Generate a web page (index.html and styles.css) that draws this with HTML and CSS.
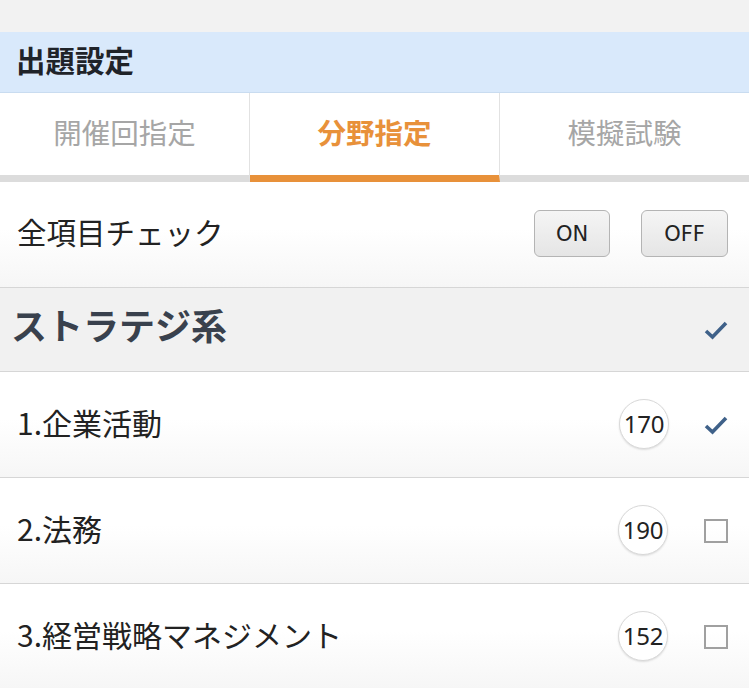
FILE: index.html
```html
<!DOCTYPE html>
<html lang="ja">
<head>
<meta charset="utf-8">
<link rel="stylesheet" href="styles.css">
</head>
<body>
<div class="topbar"></div>
<div class="header"><span class="header-title">出題設定</span></div>
<div class="tabs">
  <div class="tab"><span class="tab-text">開催回指定</span></div>
  <div class="tab active"><span class="tab-text">分野指定</span></div>
  <div class="tab last"><span class="tab-text">模擬試験</span></div>
</div>
<div class="row allcheck">
  <span class="label">全項目チェック</span>
  <div class="buttons">
    <button class="btn on">ON</button>
    <button class="btn off">OFF</button>
  </div>
</div>
<div class="category">
  <span class="cat-label">ストラテジ系</span>
  <svg class="check" viewBox="0 0 24 20" width="24" height="20"><path d="M2 11 L8.5 17 L22 3" fill="none" stroke="#3f6189" stroke-width="3.6"/></svg>
</div>
<div class="row item">
  <span class="label">1.企業活動</span>
  <span class="badge">170</span>
  <svg class="check" viewBox="0 0 24 20" width="24" height="20"><path d="M2 11 L8.5 17 L22 3" fill="none" stroke="#3f6189" stroke-width="3.6"/></svg>
</div>
<div class="row item">
  <span class="label">2.法務</span>
  <span class="badge">190</span>
  <span class="box"></span>
</div>
<div class="row item">
  <span class="label">3.経営戦略マネジメント</span>
  <span class="badge">152</span>
  <span class="box"></span>
</div>
</body>
</html>
```
FILE: styles.css
```css
html, body {
  margin: 0;
  padding: 0;
  background: #ffffff;
  font-family: "Noto Sans CJK JP", "Noto Sans", sans-serif;
  color: #222;
}
.topbar {
  height: 32px;
  background: #f2f2f2;
}
.header {
  height: 60px;
  background: #d9e9fb;
  border-bottom: 1px solid #c9dcf0;
  display: flex;
  align-items: center;
  padding-left: 16px;
  font-size: 29.5px;
  font-weight: 700;
  color: #1f2329;
  line-height: 1;
}
.header-title {
  margin-bottom: 4px;
}
.tabs {
  display: flex;
  height: 89px;
}
.tab {
  flex: 1;
  display: flex;
  align-items: center;
  justify-content: center;
  border-right: 1px solid #e2e2e2;
  border-bottom: 7px solid #dcdcdc;
  font-size: 28.5px;
  color: #a6a6a6;
  background: #fff;
  line-height: 1;
}
.tab-text {
  margin-bottom: 4px;
}
.tab.last { border-right: none; }
.tab.active {
  color: #e8913a;
  font-weight: 700;
  border-bottom-color: #e8913a;
}
.row {
  display: flex;
  align-items: center;
  height: 105px;
  padding: 0 21px 0 17px;
  border-bottom: 1px solid #d6d6d6;
  background: linear-gradient(#ffffff 0%, #ffffff 45%, #f6f6f6 100%);
}
.label {
  font-size: 30px;
  color: #222;
  flex: 1;
  line-height: 1;
  margin-bottom: 6px;
}
.allcheck .label {
  font-size: 29.5px;
}
.buttons {
  display: flex;
  gap: 31px;
  margin-bottom: 2px;
}
.btn {
  height: 47px;
  border: 1px solid #b4b4b4;
  border-radius: 6px;
  background: linear-gradient(#f5f5f5, #e5e5e5);
  font-family: "DejaVu Sans", sans-serif;
  font-size: 21px;
  color: #222;
  padding: 0;
}
.btn.on { width: 76px; }
.btn.off { width: 87px; }
.category {
  display: flex;
  align-items: center;
  height: 83px;
  padding: 0 21px 0 11px;
  background: #f1f1f1;
  border-bottom: 1px solid #d6d6d6;
}
.cat-label {
  flex: 1;
  font-size: 36px;
  font-weight: 700;
  color: #39414d;
  line-height: 1;
  margin-top: -11px;
}
.check {
  display: block;
}
.badge {
  width: 48px;
  height: 48px;
  border-radius: 50%;
  border: 1px solid #d9d9d9;
  background: #fff;
  box-shadow: 0 1px 2px rgba(0,0,0,0.12);
  display: flex;
  align-items: center;
  justify-content: center;
  font-family: "Noto Sans", sans-serif;
  font-size: 24px;
  letter-spacing: -0.3px;
  color: #222;
  margin-right: 35px;
  margin-bottom: 2px;
}
.box {
  width: 20px;
  height: 20px;
  border: 2px solid #a0a0a0;
  box-sizing: content-box;
  margin-left: 1px;
}
```
